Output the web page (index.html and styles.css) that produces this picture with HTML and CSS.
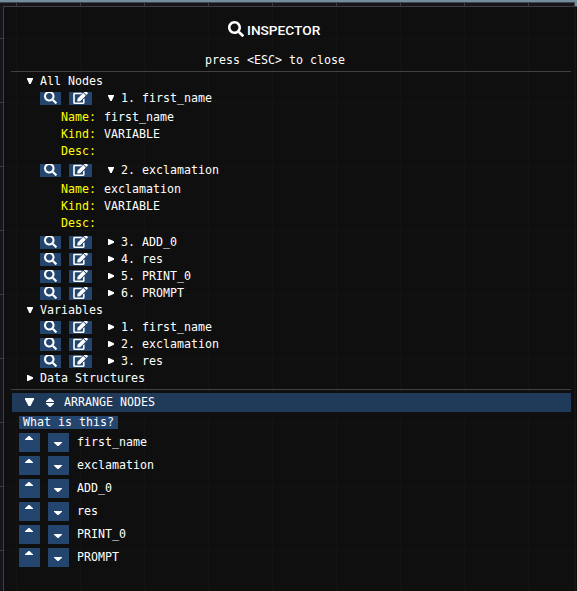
FILE: index.html
```
<!DOCTYPE html>
<html lang="en">
<head>
<meta charset="utf-8">
<title>Inspector</title>
<link rel="stylesheet" href="styles.css">
</head>
<body>
<svg width="0" height="0" class="defs">
  <symbol id="search" viewBox="0 0 512 512"><path fill="currentColor" d="M505 442.700L405.300 343c-4.500-4.500-10.600-7-17-7H372c27.600-35.300 44-79.700 44-128C416 93.100 322.900 0 208 0S0 93.100 0 208s93.100 208 208 208c48.300 0 92.700-16.400 128-44v16.300c0 6.400 2.500 12.500 7 17l99.700 99.700c9.400 9.400 24.600 9.400 33.900 0l28.300-28.300c9.400-9.400 9.400-24.600.1-34zM208 336c-70.700 0-128-57.200-128-128 0-70.700 57.200-128 128-128 70.700 0 128 57.200 128 128 0 70.700-57.200 128-128 128z"/></symbol>
  <symbol id="edit" viewBox="0 0 576 512"><path fill="currentColor" d="M402.600 83.200l90.200 90.200c3.800 3.800 3.800 10 0 13.800L274.400 405.600l-92.800 10.300c-12.400 1.400-22.900-9.100-21.500-21.500l10.300-92.800L388.800 83.200c3.800-3.800 10-3.800 13.800 0zm162-22.900l-48.800-48.800c-15.200-15.200-39.900-15.200-55.200 0l-35.400 35.400c-3.800 3.800-3.800 10 0 13.800l90.200 90.200c3.800 3.800 10 3.800 13.800 0l35.400-35.400c15.200-15.300 15.200-40 0-55.200zM384 346.200V448H64V128h229.800c3.200 0 6.200-1.300 8.500-3.500l40-40c7.600-7.600 2.200-20.500-8.500-20.500H48C21.500 64 0 85.500 0 112v352c0 26.500 21.500 48 48 48h352c26.500 0 48-21.500 48-48V306.200c0-10.700-12.900-16-20.500-8.500l-40 40c-2.200 2.300-3.500 5.300-3.500 8.500z"/></symbol>
  <symbol id="down" viewBox="0 0 6 6" preserveAspectRatio="none"><path d="M0 0h6v1L3.700 6H2.300L0 1z" fill="currentColor"/></symbol>
  <symbol id="right" viewBox="0 0 6 6" preserveAspectRatio="none"><path d="M0 0h1l5 2.300v1.400L1 6H0z" fill="currentColor"/></symbol>
  <symbol id="caret-up" viewBox="0 0 8 4" preserveAspectRatio="none"><path d="M3.500 0h1L8 3.200V4H0v-.8z" fill="currentColor"/></symbol>
  <symbol id="caret-down" viewBox="0 0 8 4" preserveAspectRatio="none"><path d="M0 0h8v.8L4.500 4h-1L0 .8z" fill="currentColor"/></symbol>
</svg>
<div class="canvas">
<main class="panel">
  <header class="title"><svg class="title-icon"><use href="#search"/></svg><h1>INSPECTOR</h1></header>
  <p class="hint">press &lt;ESC&gt; to close</p>
  <hr>
  <section class="tree">
    <div class="group"><svg class="arrow"><use href="#down"/></svg>All Nodes</div>
    <div class="node"><button class="find"><svg><use href="#search"/></svg></button><button class="edit"><svg><use href="#edit"/></svg></button><svg class="arrow"><use href="#down"/></svg>1. first_name</div>
    <dl><dt>Name:</dt><dd>first_name</dd><dt>Kind:</dt><dd>VARIABLE</dd><dt>Desc:</dt><dd></dd></dl>
    <div class="node"><button class="find"><svg><use href="#search"/></svg></button><button class="edit"><svg><use href="#edit"/></svg></button><svg class="arrow"><use href="#down"/></svg>2. exclamation</div>
    <dl><dt>Name:</dt><dd>exclamation</dd><dt>Kind:</dt><dd>VARIABLE</dd><dt>Desc:</dt><dd></dd></dl>
    <div class="node"><button class="find"><svg><use href="#search"/></svg></button><button class="edit"><svg><use href="#edit"/></svg></button><svg class="arrow"><use href="#right"/></svg>3. ADD_0</div>
    <div class="node"><button class="find"><svg><use href="#search"/></svg></button><button class="edit"><svg><use href="#edit"/></svg></button><svg class="arrow"><use href="#right"/></svg>4. res</div>
    <div class="node"><button class="find"><svg><use href="#search"/></svg></button><button class="edit"><svg><use href="#edit"/></svg></button><svg class="arrow"><use href="#right"/></svg>5. PRINT_0</div>
    <div class="node"><button class="find"><svg><use href="#search"/></svg></button><button class="edit"><svg><use href="#edit"/></svg></button><svg class="arrow"><use href="#right"/></svg>6. PROMPT</div>
    <div class="group"><svg class="arrow"><use href="#down"/></svg>Variables</div>
    <div class="node"><button class="find"><svg><use href="#search"/></svg></button><button class="edit"><svg><use href="#edit"/></svg></button><svg class="arrow"><use href="#right"/></svg>1. first_name</div>
    <div class="node"><button class="find"><svg><use href="#search"/></svg></button><button class="edit"><svg><use href="#edit"/></svg></button><svg class="arrow"><use href="#right"/></svg>2. exclamation</div>
    <div class="node"><button class="find"><svg><use href="#search"/></svg></button><button class="edit"><svg><use href="#edit"/></svg></button><svg class="arrow"><use href="#right"/></svg>3. res</div>
    <div class="group"><svg class="arrow"><use href="#right"/></svg>Data Structures</div>
  </section>
  <hr>
  <section class="arrange">
    <h2><svg class="open"><use href="#down"/></svg><span class="sort"><svg><use href="#caret-up"/></svg><svg><use href="#caret-down"/></svg></span>ARRANGE NODES</h2>
    <button class="what">What is this?</button>
    <ul>
      <li><button class="up"><svg><use href="#caret-up"/></svg></button><button class="dn"><svg><use href="#caret-down"/></svg></button>first_name</li>
      <li><button class="up"><svg><use href="#caret-up"/></svg></button><button class="dn"><svg><use href="#caret-down"/></svg></button>exclamation</li>
      <li><button class="up"><svg><use href="#caret-up"/></svg></button><button class="dn"><svg><use href="#caret-down"/></svg></button>ADD_0</li>
      <li><button class="up"><svg><use href="#caret-up"/></svg></button><button class="dn"><svg><use href="#caret-down"/></svg></button>res</li>
      <li><button class="up"><svg><use href="#caret-up"/></svg></button><button class="dn"><svg><use href="#caret-down"/></svg></button>PRINT_0</li>
      <li><button class="up"><svg><use href="#caret-up"/></svg></button><button class="dn"><svg><use href="#caret-down"/></svg></button>PROMPT</li>
    </ul>
  </section>
</main>
</div>
</body>
</html>
```

FILE: styles.css
```
* { box-sizing: border-box; margin: 0; padding: 0; }
body {
  height: 591px;
  overflow: hidden;
  background: #738f9d;
  color: #fff;
  font: 11.63px/13px "DejaVu Sans Mono", monospace;
}
svg { display: block; flex: none; }
.defs { position: absolute; }
.canvas {
  height: 591px;
  padding-top: 6px;
  background:
    linear-gradient(#45454f, #45454f) 0 2px / 575px 1px no-repeat,
    linear-gradient(#45454f, #45454f) 574px 2px / 1px 4px no-repeat,
    linear-gradient(#738f9d, #738f9d) 0 0 / 577px 2px no-repeat,
    linear-gradient(#738f9d, #738f9d) 575px 0 / 2px 6px no-repeat,
    linear-gradient(90deg, #3b3b44 1px, transparent 1px) 16px 0 / 64px 64px,
    linear-gradient(#3b3b44 1px, transparent 1px) 0 38px / 64px 64px,
    #15151b;
}
.panel {
  height: 585px;
  margin-left: 3px;
  padding: 12px 6px 0 7px;
  border: solid #3f3f47;
  border-width: 1px 0 0 1px;
  background:
    linear-gradient(#151515, #151515) 570px 0 / 2px 100% no-repeat,
    linear-gradient(90deg, #131313 1px, transparent 1px) 12px 0 / 64px 64px,
    linear-gradient(#131313 1px, transparent 1px) 0 31px / 64px 64px,
    #0f0f0f;
}
.title { display: flex; height: 22px; gap: 3px; padding-left: 217px; }
.title-icon { width: 16px; height: 16px; margin-top: 2px; }
h1 { font: 500 13.700px/23px Roboto, sans-serif; }
.hint { height: 13px; margin: 13px 0 4px; padding-left: 194px; }
hr { height: 1px; border: 0; background: #414144; }
.tree { display: flex; flex-direction: column; gap: 4px; padding: 3px 0 4px 16px; }
.group, .node { display: flex; height: 13px; align-items: center; white-space: pre; }
.arrow { width: 6px; height: 6px; margin-bottom: 1px; }
.group .arrow { margin-right: 7px; }
.node { padding-left: 13px; }
button { display: flex; flex: none; border: 0; background: #23456e; color: #fff; font: inherit; overflow: hidden; }
.find, .edit { height: 13px; }
.find { width: 21px; margin-right: 8px; padding-left: 4px; }
.edit { width: 23px; margin-right: 16px; padding-left: 4px; }
.find svg { width: 13px; height: 13px; margin-top: -1px; }
.edit svg { width: 15px; height: 13px; margin-top: -1px; }
.node .arrow { margin-right: 7px; }
dl { display: grid; grid-template-columns: 43px 1fr; grid-auto-rows: 13px; row-gap: 4px; padding: 2px 0 2px 34px; }
dt { color: #ff0; }
.arrange { padding: 3px 0 0 1px; }
h2 { display: flex; align-items: center; height: 19px; background: #203a59; font: inherit; }
.open { width: 9px; height: 8px; margin: 0 12px 1px 13px; }
.sort { display: flex; flex-direction: column; gap: 1px; margin: 0 10px 1px 0; }
.sort svg { width: 8px; height: 4px; }
.what { width: 99px; height: 13px; margin: 4px 0 4px 7px; padding-left: 4px; line-height: 13px; white-space: nowrap; }
ul { display: grid; row-gap: 4px; padding-left: 7px; list-style: none; }
li { display: flex; align-items: center; height: 19px; }
.up, .dn { width: 21px; height: 19px; margin-right: 8px; padding-left: 6px; }
.up svg, .dn svg { width: 8px; height: 4px; }
.up svg { margin-top: 3px; }
.dn svg { margin-top: 9px; }
```
